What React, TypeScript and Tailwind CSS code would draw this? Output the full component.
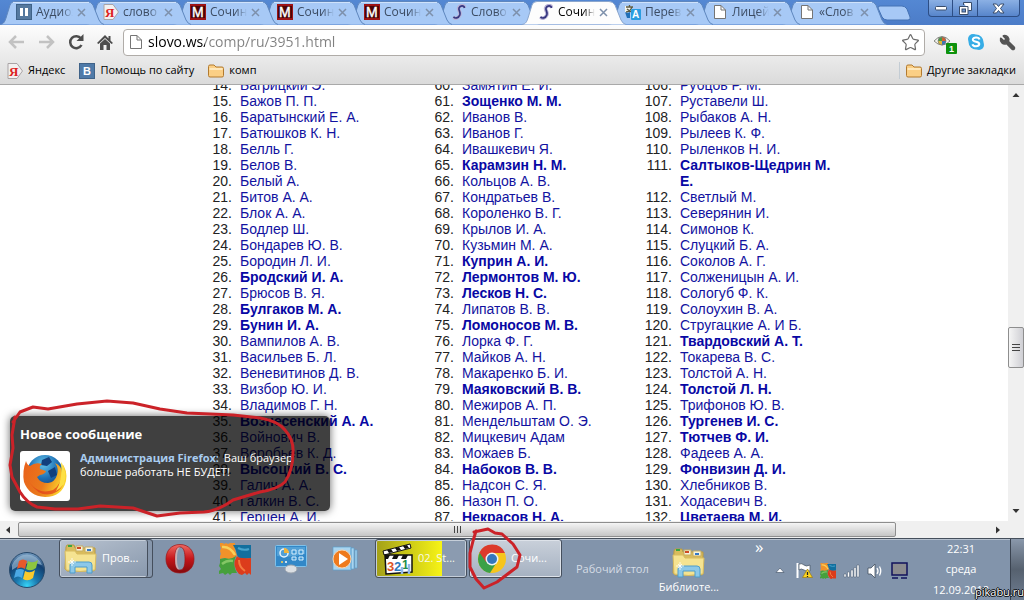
import type { ReactNode } from "react";
import { Star, Wrench } from "lucide-react";

type TabItem = { title: string; icon: ReactNode; active?: boolean };
type Author = { name: string; bold?: boolean };

/* ---------- icons ---------- */

function YandexIcon() {
  return (
    <svg width="16" height="16" viewBox="0 0 16 16" className="shrink-0">
      <path d="M1 .5H10L15.5 8L10 15.5H1Z" fill="#f2f0f0" stroke="#a9a4a6" />
      <text x="2" y="13" fontSize="13" fontWeight="bold" fill="#dd1f1f" fontFamily="Liberation Serif, serif">Я</text>
    </svg>
  );
}

function PauseIcon() {
  return (
    <svg width="16" height="16" viewBox="0 0 16 16" className="shrink-0">
      <rect x=".5" y=".5" width="15" height="15" fill="#55799f" stroke="#3f6288" />
      <path d="M4 4H7V12H4ZM9 4H12V12H9Z" fill="#fff" />
    </svg>
  );
}

function VkIcon() {
  return (
    <svg width="16" height="16" viewBox="0 0 16 16" className="shrink-0">
      <rect x=".5" y=".5" width="15" height="15" fill="#4f7aa8" stroke="#3f6288" />
      <text x="4" y="12" fontSize="11" fontWeight="bold" fill="#fff" fontFamily="Liberation Sans, sans-serif">B</text>
    </svg>
  );
}

function MIcon() {
  return (
    <svg width="16" height="16" viewBox="0 0 16 16" className="shrink-0">
      <rect width="16" height="16" fill="#9c1215" />
      <rect x="1" y="2" width="14" height="12" fill="#4a0507" />
      <text x="2" y="13" fontSize="14" fill="#fff" stroke="#fff" strokeWidth=".4" fontFamily="Liberation Sans, sans-serif">M</text>
    </svg>
  );
}

function SIcon() {
  return (
    <svg width="16" height="16" viewBox="0 0 16 16" className="shrink-0">
      <path d="M13.500 3.500C13 .8 8.500 1 7.700 4C7 7 10 7.600 8.800 11C7.500 14.500 4 15 2.500 13" fill="none" stroke="#b9b2d6" strokeWidth="3.600" />
      <path d="M13.500 4C13 1 9 1.200 8 4C7.300 7 10 7.600 8.800 11C7.500 14.300 4 14.800 2.500 12.800" fill="none" stroke="#34357f" strokeWidth="1.7" />
    </svg>
  );
}

function TranslateIcon() {
  return (
    <svg width="16" height="16" viewBox="0 0 16 16" className="shrink-0">
      <path d="M0 2H7V8H0Z" fill="#f3f3ea" />
      <path d="M1 3H8M4.500 1V3M7 3Q5 8 1 8M2 5Q5 8 8 8" stroke="#5b5a43" strokeWidth="1.3" fill="none" />
      <path d="M0 8Q2 10 5 8V14H2Z" fill="#1f6fb8" />
      <rect x="6" y="5" width="10" height="11" rx="1" fill="#2a9de0" />
      <text x="7" y="14" fontSize="10" fontWeight="bold" fill="#fff" fontFamily="Liberation Sans, sans-serif">A</text>
    </svg>
  );
}

function PageIcon() {
  return (
    <svg width="16" height="16" viewBox="0 0 16 16" className="shrink-0">
      <path d="M2.500 1.500H9L13.500 6V14.500H2.500Z" fill="#fff" stroke="#757575" />
      <path d="M9 1.500V6H13.500" fill="none" stroke="#757575" />
    </svg>
  );
}

function FolderIcon() {
  return (
    <svg width="16" height="16" viewBox="0 0 16 16" className="shrink-0">
      <path d="M.5 12.500V3.500Q.5 2 2 2H6L8 4H14Q15.500 4 15.500 5.500V12.500Q15.500 14 14 14H2Q.5 14 .5 12.500Z" fill="#fbcf85" stroke="#b27a2f" />
      <path d="M1.500 6H14.500" stroke="#fff0cf" strokeWidth="1.5" />
    </svg>
  );
}

function ExplorerIcon() {
  return (
    <svg width="34" height="32" viewBox="0 0 34 32" className="shrink-0">
      <path d="M2 4L3 2H10L11 5H31V27L29 28H3L1 26Z" fill="#d9bc5c" stroke="#b89a45" />
      <path d="M12 3H19V8H12ZM21 4H29V9H21Z" fill="#f7f3dc" stroke="#c6ad60" />
      <path d="M4 2H8V4H4Z" fill="#3ba63f" />
      <path d="M13 4H17V6H13Z" fill="#d04a24" />
      <path d="M23 6H27V8H23Z" fill="#3479c7" />
      <path d="M1 8H11L13 11H32L31 27Q16 30 2 27Z" fill="#f5e391" stroke="#d8bc61" />
      <path d="M6 30V22Q6 19 9 19H25Q28 19 28 22V30H23V24H11V30Z" fill="#8cc8e8" stroke="#4d9ccc" />
      <path d="M8 15V23M4 19H12M6 17L10 21M10 17L6 21" stroke="#fff" strokeWidth=".8" />
    </svg>
  );
}

function StartOrb() {
  return (
    <svg width="38" height="38" viewBox="0 0 38 38">
      <defs>
        <radialGradient id="orb" cx=".5" cy=".95" r=".9">
          <stop offset="0" stopColor="#36d4f7" />
          <stop offset=".35" stopColor="#1b78ae" />
          <stop offset=".75" stopColor="#123f70" />
          <stop offset="1" stopColor="#6b93b9" />
        </radialGradient>
      </defs>
      <circle cx="19" cy="19" r="17.500" fill="url(#orb)" stroke="#27496b" />
      <path d="M4 14A16 16 0 0 1 34 14Q19 8 4 19Z" fill="#a9c6de" opacity=".6" />
      <path d="M11 10Q15 7 19 10L17 18Q13 15 9 18Z" fill="#e8582b" />
      <path d="M20 10Q25 13 30 9L28 17Q23 21 18 18Z" fill="#8dc63f" />
      <path d="M8 19Q12 17 16 19L14 27Q10 24 6 27Z" fill="#4ba8e4" />
      <path d="M17 20Q22 23 27 19L25 27Q20 31 15 28Z" fill="#fbc92c" />
    </svg>
  );
}

function OperaIcon() {
  return (
    <svg width="30" height="32" viewBox="0 0 30 32">
      <defs>
        <linearGradient id="opera" x1="0" y1="0" x2="0" y2="1">
          <stop offset="0" stopColor="#ef6a63" />
          <stop offset=".5" stopColor="#c5161a" />
          <stop offset="1" stopColor="#83090c" />
        </linearGradient>
      </defs>
      <path fillRule="evenodd" d="M15 1.500C24 1.500 29 8 29 16S24 30 15 30S1 24 1 16S6 1.500 15 1.500ZM15 4C11 4 10 9 10 16S11 27 15 27S20 22 20 16S19 4 15 4Z" fill="url(#opera)" stroke="#9b1416" strokeWidth=".7" />
      <path d="M10 16Q10 4 15 4Q12 7 12 16Q12 25 15 27Q10 27 10 16Z" fill="#e6b9b7" opacity=".7" />
    </svg>
  );
}

function AvgIcon({ size }: { size: number }) {
  return (
    <svg width={size} height={size} viewBox="0 0 32 32">
      <path d="M1 0H4L5 1L7 0L9 1L11 0H16Q15 6 18 12Q12 18 6 15L1 16V13L2 11L1 8L2 5L1 3Z" fill="#f0922a" />
      <path d="M14 2H32V15L24 16Q20 16 18 12Q17 6 14 2Z" fill="#136f9e" />
      <path d="M1 16L6 15Q12 17 17 13Q13 21 18 30H13L11 32L9 30L6 32L4 30L0 31V28L2 26L0 23L1 20Z" fill="#46a03c" />
      <path d="M18 13Q20 16 32 15V32L30 30L28 32L26 30L23 32L20 31Q12 22 18 13Z" fill="#dc3c1c" />
      <path d="M3 4Q11 3 16 12" stroke="#f9d05a" strokeWidth="2.500" fill="none" />
      <path d="M3 21Q8 17 14 18" stroke="#84c766" strokeWidth="2.500" fill="none" />
      <path d="M19 5Q25 8 30 6" stroke="#48a3cc" strokeWidth="2" fill="none" />
      <path d="M20 17Q20 24 26 28" stroke="#f47a3f" strokeWidth="2" fill="none" />
    </svg>
  );
}

function ControlPanelIcon() {
  return (
    <svg width="32" height="30" viewBox="0 0 32 30">
      <rect x=".5" y="1.500" width="31" height="21" rx="1" fill="#3288c8" stroke="#7fc1ea" />
      <path d="M2 3H30V10Q16 14 2 12Z" fill="#67b0e0" opacity=".6" />
      <circle cx="9" cy="9" r="4" fill="none" stroke="#e7f5ff" strokeWidth="1.5" />
      <path d="M9 9V4A5 5 0 0 1 14 9Z" fill="#f0b43c" />
      <path d="M17 6H21V10H17ZM24 6H28V10H24ZM17 13H21V16H17ZM24 13H28V16H24Z" fill="#3b93d0" stroke="#d8f0ff" />
      <circle cx="7" cy="18" r="1" fill="#ffd24d" />
      <circle cx="11" cy="18" r="1" fill="#fff" />
      <ellipse cx="16" cy="25" rx="6" ry="4" fill="#dbdfe3" stroke="#9aa3ad" />
    </svg>
  );
}

function MediaPlayerIcon() {
  return (
    <svg width="30" height="28" viewBox="0 0 30 28">
      <path d="M2 2H20V25H2ZM20 3H23V24H20ZM24 5H26V23H24Z" fill="#a9d4ef" stroke="#5ba0cf" strokeWidth=".7" />
      <circle cx="11" cy="14" r="9" fill="#ee7a1d" stroke="#f8d3ae" />
      <path d="M8 8L17 14L8 20Z" fill="#fff" />
    </svg>
  );
}

function ClapperIcon() {
  return (
    <svg width="32" height="32" viewBox="0 0 32 32" className="shrink-0">
      <path d="M1 8L28 1L29 5L2 12Z" fill="#fff" stroke="#111" />
      <path d="M5 7L9 6L11 9L7 10ZM13 5L17 4L19 7L15 8ZM21 3L25 2L27 5L23 6Z" fill="#111" />
      <path d="M3 12H30V29L4 31Z" fill="#fff" stroke="#111" strokeWidth="1.5" />
      <path d="M3 12H8L6 16H3ZM12 12H17L15 16H10ZM21 12H26L24 16H19Z" fill="#111" />
      <text x="5" y="28" fontSize="13" fontWeight="bold" fill="#dd5324" fontFamily="Liberation Sans, sans-serif">3</text>
      <text x="12" y="28" fontSize="13" fontWeight="bold" fill="#2a79bd" fontFamily="Liberation Sans, sans-serif">2</text>
      <text x="20" y="26" fontSize="12" fontWeight="bold" fill="#1d8d4a" fontFamily="Liberation Sans, sans-serif">1</text>
      <path d="M20 24V31M27 21V31" stroke="#92b8e8" strokeWidth="2.500" />
    </svg>
  );
}

function ChromeIcon() {
  return (
    <svg width="30" height="30" viewBox="0 0 30 30" className="shrink-0">
      <circle cx="15" cy="15" r="14" fill="#f6c51c" />
      <path d="M15 15L3 8A14 14 0 0 0 13 29L20 18Z" fill="#3ba147" />
      <path d="M2.500 8.500A14 14 0 0 1 28 9H15L9 18Z" fill="#dc3a2b" />
      <circle cx="15" cy="15" r="6.500" fill="#eef3f6" />
      <circle cx="15" cy="15" r="5" fill="#3477bd" />
    </svg>
  );
}

function FirefoxIcon() {
  return (
    <svg width="46" height="46" viewBox="0 0 46 46">
      <defs>
        <radialGradient id="globe" cx=".45" cy=".25" r=".8">
          <stop offset="0" stopColor="#63c3ea" />
          <stop offset=".5" stopColor="#1d6fb4" />
          <stop offset="1" stopColor="#122c66" />
        </radialGradient>
        <linearGradient id="fox" x1="0" y1="0" x2="1" y2=".3">
          <stop offset="0" stopColor="#e9601b" />
          <stop offset=".6" stopColor="#ea7a1c" />
          <stop offset="1" stopColor="#fbd32c" />
        </linearGradient>
      </defs>
      <circle cx="23" cy="20" r="18" fill="url(#globe)" />
      <path d="M20 7L27 4L30 9L25 13L19 12ZM26 18L33 14L35 22L29 25Z" fill="#123f7d" />
      <path d="M4 8Q5 12 8 13Q13 9 20 11Q17 13 18 16L24 18Q23 21 18 22L15 24Q18 30 26 30Q33 29 35 22Q37 15 33 10Q40 13 40 20Q43 14 39 9Q46 17 44 28Q40 44 23 44Q7 43 2 29Q0 18 4 8Z" fill="url(#fox)" />
      <path d="M8 30Q17 42 31 37Q39 32 40 20Q45 31 36 38Q20 48 8 30Z" fill="#e2411c" opacity=".75" />
      <path d="M39 9Q46 19 42 31Q38 36 34 38Q41 27 39 9Z" fill="#fde045" />
    </svg>
  );
}

function EyeIcon() {
  return (
    <svg width="26" height="24" viewBox="0 0 26 24">
      <path d="M1 9Q9 0 17 9Q9 17 1 9Z" fill="#f3f3ee" stroke="#888a83" />
      <path d="M9 5V9H5A4 4 0 0 1 9 5Z" fill="#4a9847" />
      <path d="M9 5A4 4 0 0 1 13 9H9Z" fill="#d25f30" />
      <path d="M5 9H9V13A4 4 0 0 1 5 9Z" fill="#dcb93b" />
      <path d="M13 9A4 4 0 0 1 9 13V9Z" fill="#3d75b5" />
      <circle cx="9" cy="9" r="4" fill="none" stroke="#777" strokeWidth=".7" />
      <rect x="13" y="11" width="11" height="11" rx="1" fill="#0d920d" />
      <text x="16" y="20" fontSize="9" fontWeight="bold" fill="#fff" fontFamily="Liberation Sans, sans-serif">1</text>
    </svg>
  );
}

function SkypeIcon() {
  return (
    <svg width="18" height="18" viewBox="0 0 18 18">
      <circle cx="6" cy="6" r="5" fill="#37ade6" />
      <circle cx="12" cy="12" r="5" fill="#37ade6" />
      <circle cx="9" cy="9" r="7.500" fill="#37ade6" />
      <path d="M12.500 6.500C12 3.500 5.500 3.800 5.800 6.800C6 9.500 12.500 8.200 12.300 11.200C12 14 6 13.800 5.500 11.200" fill="none" stroke="#fff" strokeWidth="2" />
    </svg>
  );
}

/* ---------- data ---------- */

const tabs: TabItem[] = [
  { title: "Аудиоз", icon: <PauseIcon /> },
  { title: "слово", icon: <YandexIcon /> },
  { title: "Сочин", icon: <MIcon /> },
  { title: "Сочин", icon: <MIcon /> },
  { title: "Сочин", icon: <MIcon /> },
  { title: "Слово", icon: <SIcon /> },
  { title: "Сочин", icon: <SIcon />, active: true },
  { title: "Перев", icon: <TranslateIcon /> },
  { title: "Лицей", icon: <PageIcon /> },
  { title: "«Слов", icon: <PageIcon /> },
];

// an asterisk marks an author shown in bold
const parse = (list: string): Author[] =>
  list.split("|").map((s) => (s[0] === "*" ? { name: s.slice(1), bold: true } : { name: s }));

const first = parse(
  "Багрицкий Э.|Бажов П. П.|Баратынский Е. А.|Батюшков К. Н.|Белль Г.|Белов В.|Белый А.|Битов А. А.|Блок А. А.|Бодлер Ш.|Бондарев Ю. В.|Бородин Л. И.|*Бродский И. А.|Брюсов В. Я.|*Булгаков М. А.|*Бунин И. А.|Вампилов А. В.|Васильев Б. Л.|Веневитинов Д. В.|Визбор Ю. И.|Владимов Г. Н.|*Вознесенский А. А.|Войнович В.|Воробьев К. Д.|*Высоцкий В. С.|Галич А. А.|Галкин В. С.|Герцен А. И."
);
const second = parse(
  "Замятин Е. И.|*Зощенко М. М.|Иванов В.|Иванов Г.|Ивашкевич Я.|*Карамзин Н. М.|Кольцов А. В.|Кондратьев В.|Короленко В. Г.|Крылов И. А.|Кузьмин М. А.|*Куприн А. И.|*Лермонтов М. Ю.|*Лесков Н. С.|Липатов В. В.|*Ломоносов М. В.|Лорка Ф. Г.|Майков А. Н.|Макаренко Б. И.|*Маяковский В. В.|Межиров А. П.|Мендельштам О. Э.|Мицкевич Адам|Можаев Б.|*Набоков В. В.|Надсон С. Я.|Назон П. О.|*Некрасов Н. А."
);
const third = parse(
  "Рубцов Р. М.|Руставели Ш.|Рыбаков А. Н.|Рылеев К. Ф.|Рыленков Н. И.|*Салтыков-Щедрин М. Е.|Светлый М.|Северянин И.|Симонов К.|Слуцкий Б. А.|Соколов А. Г.|Солженицын А. И.|Сологуб Ф. К.|Солоухин В. А.|Стругацкие А. И Б.|*Твардовский А. Т.|Токарева В. С.|Толстой А. Н.|*Толстой Л. Н.|Трифонов Ю. В.|*Тургенев И. С.|*Тютчев Ф. И.|Фадеев А. А.|*Фонвизин Д. И.|Хлебников В.|Ходасевич В.|*Цветаева М. И."
);

/* ---------- browser ---------- */

function Tab({ tab, index }: { tab: TabItem; index: number }) {
  return (
    <li
      className="relative flex h-6 w-[87px] shrink-0 items-center pl-4"
      style={{ zIndex: tab.active ? 20 : 10 - index }}
    >
      <svg width="106" height="25" viewBox="0 0 106 25" className="absolute top-0 left-0 max-w-none">
        <path
          d="M0 24.500C4 24 5 21 6 18L10 5Q11 1.500 15 1.500H87Q91 1.500 93 5L99 20Q101 24 104 24.500"
          fill={tab.active ? "#fdfdfd" : "#a7c9f6"}
          stroke={tab.active ? "#8ba6cd" : "#5f87be"}
        />
        {!tab.active && <path d="M13 2.500H89" stroke="#cfe2fb" />}
      </svg>
      <button className="relative flex min-w-0 items-center gap-1">
        {tab.icon}
        <span
          className={
            tab.active
              ? "w-[37px] overflow-hidden text-left text-[12px] leading-4 whitespace-nowrap text-black [mask-image:linear-gradient(to_right,#000_70%,transparent)]"
              : "w-[37px] overflow-hidden text-left text-[12px] leading-4 whitespace-nowrap text-[#3c4c63] [mask-image:linear-gradient(to_right,#000_70%,transparent)]"
          }
        >
          {tab.title}
        </span>
      </button>
      <button aria-label="Закрыть вкладку" className="relative ml-1 shrink-0">
        <svg width="9" height="9" viewBox="0 0 9 9">
          <path d="M1 1L8 8M8 1L1 8" stroke="#7d90ab" strokeWidth="1.5" />
        </svg>
      </button>
    </li>
  );
}

function TabStrip() {
  return (
    <div className="flex h-[25px] justify-between bg-linear-to-b from-[#5488d3] to-[#4c7cc8]">
      <ul className="flex">
        {tabs.map((tab, i) => (
          <Tab key={i} tab={tab} index={i} />
        ))}
        <li className="ml-1.5 flex items-center">
          <button aria-label="Новая вкладка">
            <svg width="36" height="16" viewBox="0 0 36 16">
              <path d="M4 1H26Q29 1 31 4L34 12Q35 15 32 15H11Q8 15 6 12L2 3Q2 1 4 1Z" fill="#a7c9f6" stroke="#4472b4" />
            </svg>
          </button>
        </li>
      </ul>
      <div className="mr-1 flex h-[17px] shrink-0 divide-x divide-[#2d4e85] rounded-b border border-t-0 border-[#2d4e85] bg-linear-to-b from-[#8bb0e4] to-[#5785cb]">
        <button aria-label="Свернуть" className="flex w-6 items-center justify-center">
          <svg width="12" height="6" viewBox="0 0 12 6"><rect x=".5" y="1.500" width="11" height="3.500" rx="1" fill="#fff" stroke="#384c6b" /></svg>
        </button>
        <button aria-label="Восстановить" className="flex w-[25px] items-center justify-center">
          <svg width="13" height="13" viewBox="0 0 13 13">
            <path d="M4.500.5H12.500V8.500H9.500M4.500 3V.5M.5 4.500H9V12.500H.5Z" fill="#fff" stroke="#384c6b" />
            <rect x="3" y="7" width="3.500" height="3" fill="#6d96d2" stroke="#384c6b" />
          </svg>
        </button>
        <button aria-label="Закрыть" className="flex w-[41px] items-center justify-center">
          <svg width="13" height="11" viewBox="0 0 13 11">
            <path d="M1 1H4.500L6.500 3.500L8.500 1H12L8.500 5.500L12 10H8.500L6.500 7.500L4.500 10H1L4.500 5.500Z" fill="#fff" stroke="#384c6b" />
          </svg>
        </button>
      </div>
    </div>
  );
}

function Toolbar() {
  return (
    <div className="flex h-[34px] items-center pr-2 pl-2">
      <div className="flex shrink-0 items-center gap-[13px]">
        <button aria-label="Назад">
          <svg width="17" height="14" viewBox="0 0 17 14"><path d="M8 1L2 7L8 13M2 7H16" fill="none" stroke="#c2c2c2" strokeWidth="2.500" /></svg>
        </button>
        <button aria-label="Вперёд">
          <svg width="17" height="14" viewBox="0 0 17 14"><path d="M9 1L15 7L9 13M15 7H1" fill="none" stroke="#c2c2c2" strokeWidth="2.500" /></svg>
        </button>
        <button aria-label="Обновить">
          <svg width="16" height="16" viewBox="0 0 16 16">
            <path d="M13 4.500A6 6 0 1 0 13.500 11" fill="none" stroke="#4d4d4d" strokeWidth="2.500" />
            <path d="M15.500 0V7H8.500Z" fill="#4d4d4d" />
          </svg>
        </button>
        <button aria-label="Домашняя страница">
          <svg width="16" height="16" viewBox="0 0 16 16">
            <path d="M8 1L0 9L1.500 10L8 4L14.500 10L16 9L13.500 6.500V2H11.500V4.500Z" fill="#4d4d4d" />
            <path d="M3 9.500L8 5L13 9.500V16H9.500V11H6.500V16H3Z" fill="#4d4d4d" />
          </svg>
        </button>
      </div>
      <div className="ml-2.5 flex h-[27px] min-w-0 flex-1 items-center gap-1 rounded-sm border border-[#b0aca8] bg-white pr-1 pl-1">
        <PageIcon />
        <input
          type="text"
          aria-label="Адрес страницы"
          defaultValue="slovo.ws/comp/ru/3951.html"
          className="min-w-0 flex-1 bg-[linear-gradient(to_right,#000_57px,#808080_57px)] bg-clip-text text-[14px] leading-5 text-transparent outline-none"
        />
        <button aria-label="Добавить в закладки">
          <Star size={19} color="#6b6b6b" strokeWidth={1.5} />
        </button>
      </div>
      <div className="ml-2 flex shrink-0 items-center gap-2">
        <button aria-label="Расширение" className="pt-1"><EyeIcon /></button>
        <button aria-label="Skype"><SkypeIcon /></button>
        <button aria-label="Настройки" className="ml-1.5">
          <Wrench size={17} color="#555" fill="#555" className="-scale-x-100" />
        </button>
      </div>
    </div>
  );
}

function Bookmarks() {
  return (
    <nav className="flex h-[26px] items-center justify-between border-b border-[#a9a9a9] pr-2 pb-0.5 pl-[7px] text-[11px] text-black">
      <div className="flex gap-3.5">
        <a href="#yandex" className="flex items-center gap-[5px]"><YandexIcon />Яндекс</a>
        <a href="#help" className="flex items-center gap-[5px]"><VkIcon />Помощь по сайту</a>
        <a href="#comp" className="flex items-center gap-[5px]"><FolderIcon />комп</a>
      </div>
      <a href="#other" className="flex items-center gap-[5px] border-l border-[#c3ccd4] pl-1.5"><FolderIcon />Другие закладки</a>
    </nav>
  );
}

function AuthorList({ authors, start, wide }: { authors: Author[]; start: number; wide?: boolean }) {
  return (
    <ol start={start}>
      {authors.map((a, i) => (
        <li key={a.name} className="flex gap-2">
          <span className={wide ? "w-7 shrink-0 text-right" : "w-5 shrink-0 text-right"}>{start + i}.</span>
          <a href={`#author-${start + i}`} className={a.bold ? "font-bold text-[#0808a4]" : "text-[#1212a0]"}>
            {a.name}
          </a>
        </li>
      ))}
    </ol>
  );
}

function Notification() {
  return (
    <aside className="absolute bottom-2.5 left-2.5 h-[95px] w-80 rounded-[5px] bg-black/75 px-2.5 pt-2.5 text-white shadow-[0_0_8px_rgba(0,0,0,0.6)]">
      <h2 className="text-[13px] leading-4 font-bold">Новое сообщение</h2>
      <div className="mt-[9px] flex gap-2.5">
        <div className="flex size-[50px] shrink-0 items-center justify-center rounded-[3px] bg-white">
          <FirefoxIcon />
        </div>
        <p className="flex-1 text-[11px] leading-[14px]">
          <b className="mr-0.5 text-[#a9cdf0]">Администрация Firefox:</b> Ваш браузер больше работать НЕ БУДЕТ!
        </p>
      </div>
      <svg width="300" height="130" viewBox="0 395 300 130" className="pointer-events-none absolute -top-[21px] -left-2.5 max-w-none">
        <path
          d="M13 422L20 412L33 407L48 409L77 404L107 401L133 403L160 409L187 413L233 415L260 418Q278 421 285 430Q294 440 293 453Q293 470 285 482Q278 489 260 492L233 500Q218 511 204 512L180 513L157 516L133 508L100 506L78 509L55 509L37 507Q27 503 20 492L12 477L10 465L13 448L12 435L15 417"
          fill="none"
          stroke="#cb2228"
          strokeWidth="3"
          strokeLinejoin="round"
          strokeLinecap="round"
        />
      </svg>
    </aside>
  );
}

function Arrow({ d }: { d: string }) {
  return (
    <svg width="8" height="8" viewBox="0 0 8 8">
      <path d={d} fill="#333" />
    </svg>
  );
}

function VerticalScroll() {
  return (
    <div className="flex w-4 shrink-0 flex-col items-center bg-[#f0f0f0] py-1.5">
      <Arrow d="M4 2L7.500 6H.5Z" />
      <div className="flex w-full flex-1 flex-col">
        <div className="basis-[56%]" />
        <div className="flex h-[41px] shrink-0 flex-col items-center justify-center gap-[2px] rounded-[2px] border border-[#8e8e8e] bg-linear-to-r from-[#f5f5f5] to-[#cfcfd4]">
          <i className="h-px w-2 bg-[#444]" />
          <i className="h-px w-2 bg-[#444]" />
          <i className="h-px w-2 bg-[#444]" />
        </div>
      </div>
      <Arrow d="M4 6L7.500 2H.5Z" />
    </div>
  );
}

function HorizontalScroll() {
  return (
    <div className="flex h-[17px] shrink-0 items-center bg-[#f0f0f0] pr-[22px] pl-1">
      <Arrow d="M2 4L6 .5V7.500Z" />
      <div className="ml-1.5 flex h-full flex-1 items-center">
        <div className="flex h-[15px] basis-[90%] items-center justify-center gap-[2px] rounded-[2px] border border-[#8e8e8e] bg-linear-to-b from-[#f5f5f5] to-[#c6c6c6]">
          <i className="h-[7px] w-px bg-[#444]" />
          <i className="h-[7px] w-px bg-[#444]" />
          <i className="h-[7px] w-px bg-[#444]" />
        </div>
      </div>
      <Arrow d="M6 4L2 .5V7.500Z" />
    </div>
  );
}

/* ---------- taskbar ---------- */

function Tray() {
  return (
    <div className="flex h-full shrink-0">
      <div className="flex items-center gap-[7px] pt-0.5">
        <button aria-label="Показать скрытые значки" className="mr-1">
          <svg width="10" height="7" viewBox="0 0 10 7"><path d="M5 1L9 5.500H1Z" fill="#fff" stroke="#4b5a6e" strokeWidth=".7" /></svg>
        </button>
        <svg width="17" height="17" viewBox="0 0 17 17">
          <path d="M1.500 1V16" stroke="#fff" strokeWidth="2" />
          <path d="M3 2Q6 1 8 3T14 3V9Q11 10 8 8T3 8Z" fill="#fff" stroke="#44505f" strokeWidth=".7" />
          <path d="M11.500 7L16.500 15.500H6.500Z" fill="#ffd61f" stroke="#97781a" strokeWidth=".7" />
          <path d="M11.500 10V13M11.500 14V15" stroke="#222" strokeWidth="1.3" />
        </svg>
        <AvgIcon size={16} />
        <svg width="17" height="14" viewBox="0 0 17 14">
          <path d="M1 10H3V13H1ZM4.500 8H6.500V13H4.500ZM8 6H10V13H8ZM11 3.500H13V13H11ZM14 1H16V13H14Z" fill="#fff" stroke="#4b5a6e" strokeWidth=".5" />
        </svg>
        <svg width="17" height="16" viewBox="0 0 17 16">
          <path d="M1 5H4L8 1V15L4 11H1Z" fill="#fff" stroke="#44505f" strokeWidth=".8" />
          <path d="M10 5Q12 8 10 11M12.500 3.500Q15 8 12.500 12.500" fill="none" stroke="#fff" strokeWidth="1.3" />
        </svg>
        <svg width="17" height="17" viewBox="0 0 17 17">
          <rect x="1" y="1" width="15" height="12" fill="#8b8b8f" stroke="#12125c" strokeWidth="1.5" />
          <path d="M1 16H7M10 16H16" stroke="#12125c" strokeWidth="1.5" />
        </svg>
      </div>
      <time className="flex w-[102px] flex-col justify-around pl-1 text-center text-[11px] leading-4">
        <span>22:31</span>
        <span>среда</span>
        <span>12.09.2012</span>
      </time>
      <button aria-label="Свернуть все окна" className="h-full w-3.5 border-l border-[#39424f] bg-linear-to-b from-[#8a98ab] via-[#56616f] to-[#6e7d91]" />
    </div>
  );
}

function Taskbar() {
  return (
    <footer className="relative z-10 flex h-[62px] shrink-0 items-start border-t border-[#454f5c] bg-[#8294ab] text-[11px] text-white shadow-[inset_0_1px_0_#b5c0ce]">
      <button aria-label="Пуск" className="mt-3 ml-2 shrink-0">
        <StartOrb />
      </button>
      <button className="ml-[13px] flex h-[39px] w-[94px] shrink-0 items-center gap-1 rounded-[3px] border border-[#454f5d] bg-linear-to-br from-[#b9c3d0] to-[#8797ac] pl-1 shadow-[inset_-4px_0_0_#8797ac,inset_-5px_0_0_#454f5d,inset_0_0_0_1px_#c5ced9]">
        <ExplorerIcon />
        Пров...
      </button>
      <div className="mt-1 ml-3 flex shrink-0 items-center gap-6">
        <button aria-label="Opera"><OperaIcon /></button>
        <button aria-label="AVG"><AvgIcon size={32} /></button>
        <button aria-label="Панель управления"><ControlPanelIcon /></button>
        <button aria-label="Проигрыватель"><MediaPlayerIcon /></button>
      </div>
      <button className="ml-3.5 flex h-[39px] w-[92px] shrink-0 items-center gap-1 rounded-[3px] border border-[#454f5d] bg-[linear-gradient(to_right,#a3a018,#f6f316_73%,#8b9bb0_73%)] pl-1.5 shadow-[inset_0_0_0_1px_#c5ced9]">
        <ClapperIcon />
        <span className="text-[#f7f9e8]">02. St...</span>
      </button>
      <button className="relative ml-0.5 flex h-[39px] w-[93px] shrink-0 items-center gap-1 rounded-[3px] border border-[#454f5d] bg-linear-to-b from-[#c9d0da] to-[#a5b1c1] pl-[7px] shadow-[inset_0_0_0_1px_#dde2e9]">
        <ChromeIcon />
        Сочи...
        <svg width="60" height="66" viewBox="465 525 60 66" className="pointer-events-none absolute -top-3.5 -left-1 max-w-none">
          <path
            d="M473 531L487 528L494 532L501 533L512 543L519 554L516 566L504 575L496 581L483 587L475 578L469 566L469 552L472 540L475 530"
            fill="none"
            stroke="#cb2228"
            strokeWidth="3"
            strokeLinejoin="round"
            strokeLinecap="round"
          />
        </svg>
      </button>
      <span className="mt-[22px] ml-3.5 shrink-0 text-[#d5dce5]">Рабочий стол</span>
      <button className="mt-2 ml-2.5 flex shrink-0 flex-col items-center">
        <ExplorerIcon />
        <span className="leading-4">Библиоте...</span>
      </button>
      <div className="flex h-full min-w-0 flex-1 justify-between">
        <button aria-label="Ещё" className="ml-9 self-start text-[17px] leading-4">»</button>
        <Tray />
      </div>
      <span className="absolute right-0 bottom-0 text-[11px] leading-4 [text-shadow:-1px_0_#000,1px_0_#000,0_-1px_#000,0_1px_#000]">
        pikabu.ru
      </span>
    </footer>
  );
}

export default function App() {
  return (
    <div className="flex h-screen flex-col overflow-hidden bg-white font-['Open_Sans','Noto_Sans',sans-serif]">
      <TabStrip />
      <header className="shrink-0 bg-linear-to-b from-[#fdfdfd] to-[#dadada]">
        <Toolbar />
        <Bookmarks />
      </header>
      <div className="relative flex min-h-0 flex-1">
        <main className="min-w-0 flex-1 overflow-hidden pl-[212px] font-['Liberation_Sans',Arial,sans-serif] text-[14px] leading-4 text-[#222]">
          <div className="-mt-2 grid grid-cols-[222px_210px_200px]">
            <AuthorList authors={first} start={14} />
            <AuthorList authors={second} start={60} />
            <AuthorList authors={third} start={106} wide />
          </div>
        </main>
        <VerticalScroll />
        <Notification />
      </div>
      <HorizontalScroll />
      <Taskbar />
    </div>
  );
}
